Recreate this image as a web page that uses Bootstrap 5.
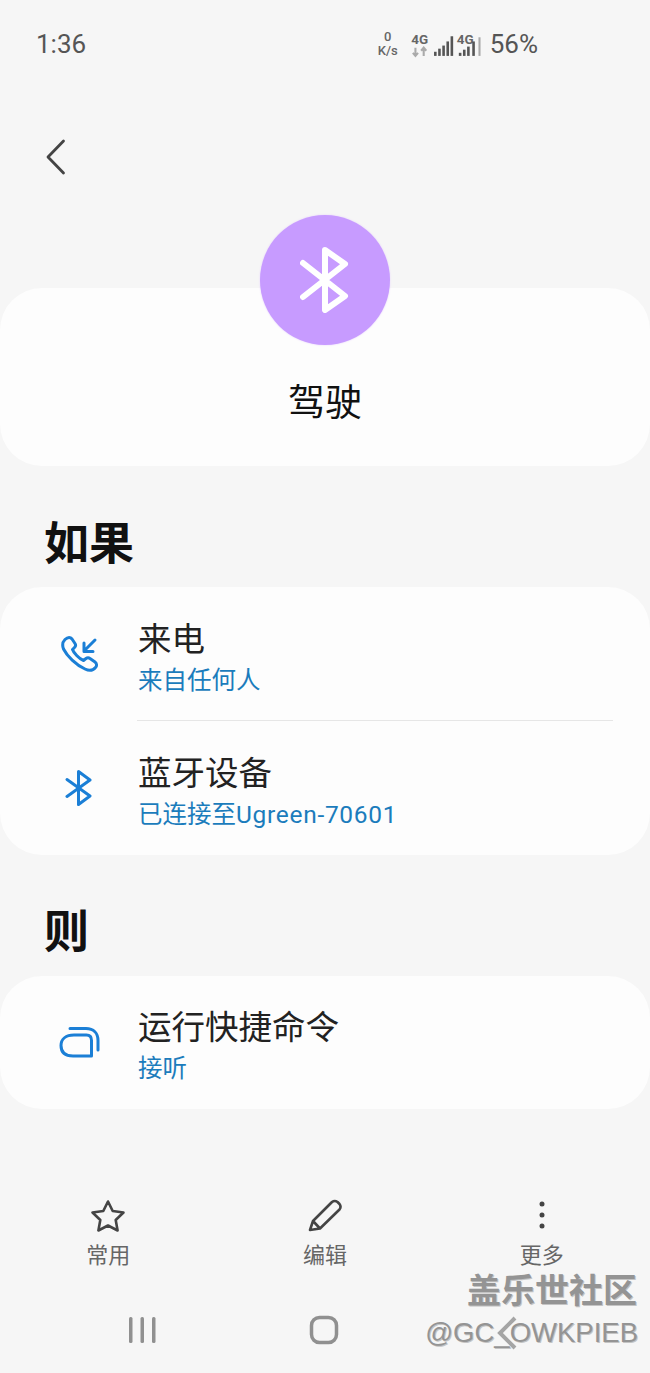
<!DOCTYPE html>
<html lang="zh-CN">
<head>
    <meta charset="UTF-8">
    <meta name="viewport" content="width=device-width,initial-scale=1">
    <title>驾驶</title>
    <link rel="stylesheet" href="https://cdn.jsdelivr.net/npm/bootstrap@5.3.3/dist/css/bootstrap.min.css">
    <style>
        html, body { height: 1373px; overflow: hidden; }
        body { background: #f6f6f6; font-family: Roboto, "Noto Sans CJK SC", sans-serif; color: #222; position: relative; }
        .status-bar { height: 87px; padding: 0 112px 0 36px; color: #555; }
        .status-time { font-size: 26px; line-height: 1; }
        .status-pct { font-size: 26px; line-height: 1; margin-left: 4px; }
        .speed { font-size: 13px; line-height: 14px; font-weight: 500; text-align: center; color: #666; margin-right: 13px; }
        .back-row { height: 115px; padding: 52px 0 0 45px; }
        .rounded-panel { background: #fdfdfd; border-radius: 42px; }
        .head-panel { height: 178px; padding-top: 94px; margin-top: 86px; text-align: center; font-size: 37px; line-height: 44px; color: #111; }
        .avatar { width: 130px; height: 130px; border-radius: 50%; background: #c79bff; position: absolute; left: 260px; top: 215px; box-shadow: 0 0 2px #e4ccff; }
        .section-title { font-size: 45px; font-weight: 700; line-height: 60px; padding-left: 44px; color: #111; }
        .first-title { margin-top: 49px; margin-bottom: 12px; }
        .second-title { margin-top: 48px; margin-bottom: 13px; }
        .rule-row { height: 133px; padding-top: 33px; }
        .rule-row-tall { height: 134px; }
        .rule-row-last { padding-top: 32px; }
        .rule-icon { width: 138px; flex: none; padding-left: 59px; padding-top: 14px; }
        .rule-icon-bt { padding-left: 65px; padding-top: 16px; }
        .rule-icon-cmd { padding-left: 59px; padding-top: 18px; }
        .rule-title { font-size: 33.500px; line-height: 40px; color: #222; }
        .rule-sub { font-size: 24.500px; line-height: 30px; color: #1b7cbc; margin-top: 6px; }
        .latin-wide { letter-spacing: .7px; }
        .rule-line { height: 1px; background: #e6e6e6; margin: 0 37px 0 137px; }
        .tool-bar { margin-top: 90px; }
        .tool-item { width: 217px; text-align: center; color: #666; font-size: 22px; line-height: 30px; }
        .tool-item svg { display: block; margin: 0 auto 8px; }
        .nav-bar { height: 60px; margin-top: 29px; }
        .nav-recent { margin-left: 128px; }
        .nav-home { margin-left: 153px; }
        .mark-box { position: absolute; right: 12px; top: 1269px; text-align: right; color: #949494; text-shadow: 1px 1px 0 #c4c4c4; }
        .mark-cn { font-size: 34px; line-height: 44px; font-weight: 700; padding-right: 1px; }
        .mark-en { font-size: 27.500px; line-height: 40px; font-family: "Liberation Sans", sans-serif; color: #949494; }
        .mark-chevron { position: absolute; left: 491px; top: 1316px; }
    </style>
</head>
<body>
<div class="status-bar d-flex align-items-center justify-content-between">
    <span class="status-time">1:36</span>
    <div class="d-flex align-items-center">
        <div class="speed">0<br>K/s</div>
        <svg width="75" height="31" viewBox="0 -4 72 30">
            <text x="0" y="11" font-family="Roboto" font-size="13" font-weight="700" fill="#666">4G</text>
            <path d="M4 15v8M1.500 20l2.500 3 2.500-3" stroke="#aaa" stroke-width="2" fill="none"/>
            <path d="M12 23v-8M9.500 18l2.500-3 2.500 3" stroke="#aaa" stroke-width="2" fill="none"/>
            <g fill="#555">
                <rect x="22" y="19" width="2.500" height="4"/><rect x="26" y="16" width="2.500" height="7"/><rect x="30" y="13" width="2.500" height="10"/><rect x="34" y="9" width="2.500" height="14"/><rect x="38" y="4" width="2.500" height="19"/>
            </g>
            <text x="44" y="11" font-family="Roboto" font-size="13" font-weight="700" fill="#666">4G</text>
            <g fill="#555">
                <rect x="46" y="20" width="2.500" height="3"/><rect x="50" y="17" width="2.500" height="6"/><rect x="54" y="14" width="2.500" height="9"/><rect x="59" y="9" width="2.500" height="14"/>
            </g>
            <rect x="65" y="5" width="2" height="18" fill="#aaa"/>
        </svg>
        <span class="status-pct">56%</span>
    </div>
</div>

<div class="back-row">
    <svg width="22" height="36" viewBox="0 0 22 36" class="d-block"><path d="M18.500 2 3 18 18.500 34" fill="none" stroke="#444" stroke-width="2.800" stroke-linecap="round" stroke-linejoin="round"/></svg>
</div>

<div class="avatar d-flex align-items-center justify-content-center">
    <svg width="50" height="66" viewBox="0 0 50 66"><path d="M3 16 45 49 25 63V3L45 17 3 50" fill="none" stroke="#fff" stroke-width="6" stroke-linecap="round" stroke-linejoin="round"/></svg>
</div>
<div class="rounded-panel head-panel">驾驶</div>

<div class="section-title first-title">如果</div>
<div class="rounded-panel">
    <div class="rule-row d-flex">
        <div class="rule-icon">
            <svg width="44" height="40" viewBox="0 0 44 40"><path d="M6 5.500C9 2.500 11.500 3 13 5l3 4.500c1 1.500.5 3-.5 4l-2 2c1 3 6.500 9.500 11 11l2.500-2c1.300-1 2.700-1 4 0l5 3.500c2 1.500 2 4 .5 5.500-2.500 3-6.500 3.500-10.500 1.500C17 31 8 22 4.500 15 3 11 3.500 8 6 5.500Z" fill="none" stroke="#1b7fd6" stroke-width="3" stroke-linejoin="round"/><path d="M36 6 25 17M25 9v8.500h9" fill="none" stroke="#1b7fd6" stroke-width="3" stroke-linecap="round" stroke-linejoin="round"/></svg>
        </div>
        <div>
            <div class="rule-title">来电</div>
            <div class="rule-sub">来自任何人</div>
        </div>
    </div>
    <div class="rule-line"></div>
    <div class="rule-row rule-row-tall d-flex">
        <div class="rule-icon rule-icon-bt">
            <svg width="27" height="36" viewBox="0 0 27 36"><path d="M2 9.500 25 26 13.500 34.500V1.500L25 10 2 26.500" fill="none" stroke="#1b7fd6" stroke-width="3" stroke-linecap="round" stroke-linejoin="round"/></svg>
        </div>
        <div>
            <div class="rule-title">蓝牙设备</div>
            <div class="rule-sub">已连接至<span class="latin-wide">Ugreen-70601</span></div>
        </div>
    </div>
</div>

<div class="section-title second-title">则</div>
<div class="rounded-panel">
    <div class="rule-row rule-row-last d-flex">
        <div class="rule-icon rule-icon-cmd">
            <svg width="42" height="32" viewBox="0 0 42 32"><path d="M15 9h12.500c3.500 0 5 2 5 5.500V30H14C6 30 2 26 2 19.500S7 9 15 9Z" fill="none" stroke="#1b7fd6" stroke-width="3" stroke-linejoin="round"/><path d="M11 2.500h16c7.500 0 12 4.500 12 12V24" fill="none" stroke="#1b7fd6" stroke-width="3" stroke-linecap="round"/></svg>
        </div>
        <div>
            <div class="rule-title">运行快捷命令</div>
            <div class="rule-sub">接听</div>
        </div>
    </div>
</div>

<div class="tool-bar d-flex">
    <div class="tool-item">
        <svg width="36" height="34" viewBox="0 0 36 34"><path d="M18 2.500 22.700 12 33.500 13.500 25.700 21 27.600 31.500 18 26.500 8.400 31.500 10.300 21 2.500 13.500 13.300 12Z" fill="none" stroke="#444" stroke-width="2.600" stroke-linejoin="round"/></svg>
        常用
    </div>
    <div class="tool-item">
        <svg width="36" height="34" viewBox="0 0 36 34"><path d="M3 31 6 22 25 3c2-1.500 3.500-1.500 5.500 0l2 2c1.500 2 1.500 3.500 0 5.500L13 29.500Z M6 22l7 7.500" fill="none" stroke="#444" stroke-width="2.600" stroke-linejoin="round"/></svg>
        编辑
    </div>
    <div class="tool-item">
        <svg width="36" height="34" viewBox="0 0 36 34"><g fill="#444"><circle cx="18" cy="5" r="2.500"/><circle cx="18" cy="16" r="2.500"/><circle cx="18" cy="27" r="2.500"/></g></svg>
        更多
    </div>
</div>

<div class="nav-bar d-flex align-items-center">
    <svg class="flex-shrink-0 nav-recent" width="28" height="28" viewBox="0 0 28 28"><g fill="#909090"><rect x="1" y="1" width="3.500" height="26" rx="1.500"/><rect x="12.500" y="1" width="3.500" height="26" rx="1.500"/><rect x="24" y="1" width="3.500" height="26" rx="1.500"/></g></svg>
    <svg class="flex-shrink-0 nav-home" width="30" height="30" viewBox="0 0 30 30"><rect x="2.500" y="2.500" width="25" height="25" rx="8" fill="none" stroke="#909090" stroke-width="3.500"/></svg>
</div>

<div class="mark-box">
    <div class="mark-cn">盖乐世社区</div>
    <div class="mark-en">@GC_OWKPIEB</div>
</div>
<svg class="mark-chevron" width="30" height="34" viewBox="0 0 30 34"><path d="M24 2 9 17l15 15" fill="none" stroke="#a5a5a5" stroke-width="4"/></svg>
</body>
</html>
